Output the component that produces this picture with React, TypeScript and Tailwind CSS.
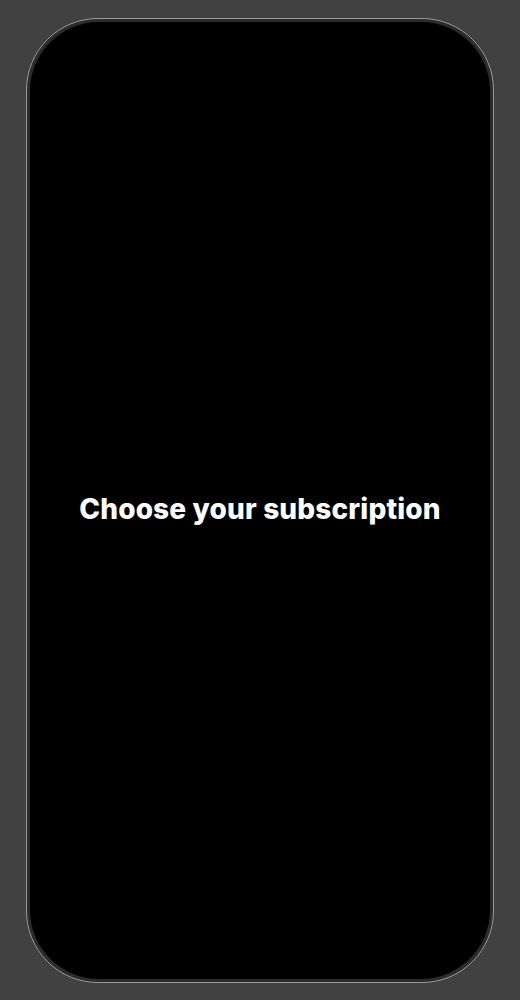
export default function App() {
  return (
    <div className="min-h-[1000px] w-full bg-[#414141] pl-[26px] pr-[26px] pt-[18px] pb-[17px]">
      <div className="h-[965px] w-[468px] rounded-[72px] border border-[#9a9a9a] bg-[#2c2c2c] p-[3px]">
        <div className="flex h-full w-full items-center justify-center rounded-[69px] bg-black pt-[16px]">
          <h1
            className="text-[28px] font-extrabold tracking-[0.15px] text-white"
            style={{ fontFamily: "Inter, 'Noto Sans', sans-serif" }}
          >
            Choose your subscription
          </h1>
        </div>
      </div>
    </div>
  );
}
